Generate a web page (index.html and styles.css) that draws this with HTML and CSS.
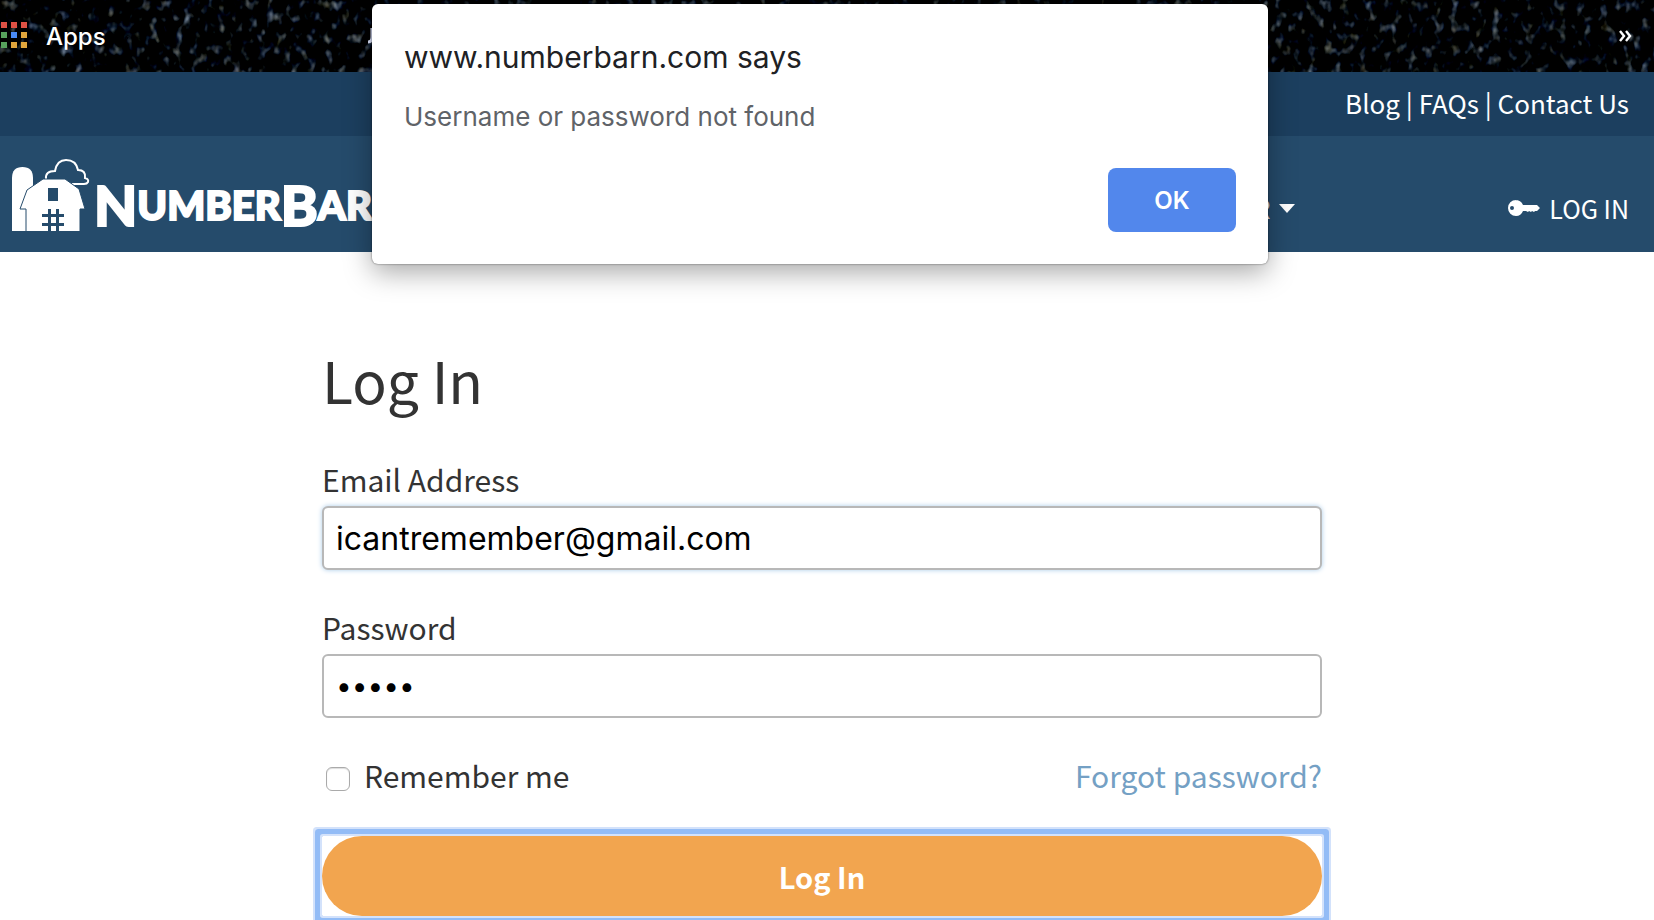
FILE: index.html
```html
<!DOCTYPE html>
<html lang="en">
<head>
  <meta charset="UTF-8">
  <meta name="viewport" content="width=device-width, initial-scale=1.0">
  <title>Log In - NumberBarn</title>
  <link rel="stylesheet" href="styles.css">
</head>
<body>
  <div class="bookmarks">
    <svg class="stars" aria-hidden="true">
      <filter id="night" x="0" y="0" width="100%" height="100%" color-interpolation-filters="sRGB">
        <feTurbulence type="fractalNoise" baseFrequency="0.12 0.09" numOctaves="2" seed="8" />
        <feColorMatrix values="1.3 0.3 0 0 -0.92  1.3 0.3 0.1 0 -0.94  1.3 0.2 0.3 0 -0.96  0 0 0 0 1" />
      </filter>
      <rect width="100%" height="100%" filter="url(#night)" />
    </svg>
    <a class="apps" href="#">
      <svg width="28" height="28" viewBox="0 0 28 28" aria-hidden="true">
        <path fill="#dd5144" d="M1 0h6v6H1zM11 0h6v6h-6zM21 0h6v6h-6z" />
        <path fill="#57a15c" d="M1 10h6v6H1zM1 20h6v6H1z" />
        <path fill="#4a8af4" d="M11 10h6v6h-6z" />
        <path fill="#e0a53c" d="M21 10h6v6h-6zM11 20h6v6h-6zM21 20h6v6h-6z" />
      </svg>
      Apps
    </a>
    <svg class="bookmark" width="24" height="16" viewBox="0 0 24 16" aria-hidden="true">
      <path fill="none" stroke="#dfe6ff" stroke-width="3" d="M4 0v9q0 5-4 5" />
    </svg>
    <button class="more" type="button" aria-label="More bookmarks">
      <svg width="14" height="12" viewBox="0 0 14 12" aria-hidden="true">
        <path fill="none" stroke="#fff" stroke-width="2.4" d="M1 1l4 5-4 5M7 1l4 5-4 5" />
      </svg>
    </button>
  </div>

  <div class="top-links">
    <a href="#">Blog</a> | <a href="#">FAQs</a> | <a href="#">Contact Us</a>
  </div>

  <header class="header">
    <a class="logo" href="#">
      <svg width="78" height="72" viewBox="0 0 78 72" aria-hidden="true">
        <path fill="#fff" d="M0 72V19Q0 8 10.500 8T21 19V72z" />
        <path fill="none" stroke="#fff" stroke-width="2" d="M34 20Q33 12 43 12Q45 1 54 1Q64 1 66 11Q74 11 73 19Q77 20 76 23Q75 25 72 25H60" />
        <path fill="#fff" stroke="#254b6b" d="M15 31L31 20H53L67 30 73 50H68V73H14V50H8z" />
        <path fill="#254b6b" d="M36 29h10v13H36zM36 50h3v22h-3zM44 50h3v22h-3zM30 55h22v3H30zM30 64h22v3H30z" />
      </svg>
      <span class="wordmark"><b>N</b>UMBER<b>B</b>ARN</span>
    </a>
    <nav class="nav">
      <button class="nav-item" type="button">
        YOUR
        <svg width="16" height="9" viewBox="0 0 16 9" aria-hidden="true"><path fill="#fff" d="M0 0h16L8 9z" /></svg>
      </button>
      <a class="nav-item" href="#">
        <svg width="33" height="18" viewBox="0 0 33 18" aria-hidden="true">
          <path fill="#fff" fill-rule="evenodd" d="M8 1q6 0 8 5h14l3 3-3 3h-2l-1 1-2-1-1 1-2-1-1 1-2-1h-3q-2 5-7 5a8 8 0 010-16zM5 7a2 2 0 100 4 2 2 0 000-4z" />
        </svg>
        LOG IN
      </a>
    </nav>
  </header>

  <main class="login">
    <h1>Log In</h1>
    <form>
      <label for="email">Email Address</label>
      <input class="field active" type="email" id="email" name="email" value="icantremember@gmail.com">

      <label for="password">Password</label>
      <input class="field" type="password" id="password" name="password" value="12345">

      <div class="options">
        <input type="checkbox" id="remember" name="remember">
        <label for="remember">Remember me</label>
        <a href="#">Forgot password?</a>
      </div>

      <div class="focus-ring">
        <button class="submit" type="submit">Log In</button>
      </div>
    </form>
  </main>

  <div class="alert" role="alertdialog" aria-labelledby="alert-title" aria-describedby="alert-text">
    <h2 id="alert-title">www.numberbarn.com says</h2>
    <p id="alert-text">Username or password not found</p>
    <button type="button">OK</button>
  </div>
</body>
</html>
```
FILE: styles.css
```css
* {
  box-sizing: border-box;
}

body {
  margin: 0;
  min-height: 100vh;
  position: relative;
  background-color: #fff;
  color: #333;
  font-family: "Noto Sans CJK SC", "Open Sans", sans-serif;
  font-size: 30px;
}

a {
  color: inherit;
  text-decoration: none;
}

button {
  padding: 0;
  border: none;
  background: none;
  color: inherit;
  font: inherit;
  cursor: pointer;
}

/* Browser bookmarks */
.bookmarks {
  position: relative;
  display: flex;
  align-items: center;
  height: 72px;
  padding-right: 21px;
  background-color: #000;
  color: #fff;
  overflow: hidden;
}

.stars {
  position: absolute;
  inset: 0;
  width: 100%;
  height: 100%;
}

.apps {
  position: relative;
  display: flex;
  align-items: center;
  gap: 18px;
  font-family: Inter, sans-serif;
  font-size: 24px;
  font-weight: 500;
}

.bookmark {
  position: relative;
  margin-left: 262px;
}

.more {
  position: relative;
  display: flex;
  margin-left: auto;
}

/* Site header */
.top-links {
  height: 64px;
  padding-right: 25px;
  background-color: #1c3f5f;
  color: #fff;
  font-size: 26px;
  line-height: 62px;
  text-align: right;
}

.header {
  display: flex;
  align-items: center;
  justify-content: space-between;
  height: 116px;
  padding: 4px 25px 0 12px;
  background-color: #254b6b;
  color: #fff;
}

.logo {
  display: flex;
  gap: 4px;
}

.wordmark {
  display: flex;
  align-items: center;
  padding-top: 18px;
  font-family: Lato, sans-serif;
  font-size: 40px;
  font-weight: 900;
  line-height: 1;
  -webkit-text-stroke: 2px #fff;
}

.wordmark b {
  font-size: 56px;
  font-weight: 900;
}

.nav {
  display: flex;
  gap: 212px;
  padding-top: 24px;
  font-size: 25px;
  line-height: 36px;
}

.nav-item {
  display: flex;
  align-items: center;
  gap: 9px;
}

/* Login form */
.login {
  width: 1010px;
  max-width: 100%;
  margin: 0 auto;
  padding: 85px 10px 0 0;
}

.login h1 {
  margin: 0 0 33px;
  font-size: 57px;
  font-weight: 400;
  line-height: 84px;
}

.login form > label {
  display: block;
  padding-bottom: 2px;
  line-height: 50px;
}

.field {
  display: block;
  width: 100%;
  height: 64px;
  margin-bottom: 32px;
  padding: 0 12px;
  border: 2px solid #b8b8b8;
  border-radius: 6px;
  background-color: #fff;
  color: #000;
  font-family: Inter, sans-serif;
  font-size: 32px;
}

.field[type="password"] {
  font-size: 28px;
}

.field.active {
  box-shadow: 0 0 5px #a9cbe8;
}

.options {
  display: flex;
  align-items: center;
  height: 50px;
  margin-bottom: 36px;
}

.options input {
  appearance: none;
  width: 24px;
  height: 24px;
  margin: 8px 14px 0 4px;
  border: 1px solid #aaa;
  border-radius: 6px;
  background-color: #fff;
  box-shadow: inset 0 1px 1px #ddd;
}

.options a {
  margin-left: auto;
  color: #74a0c4;
}

.focus-ring {
  border-radius: 1px;
  box-shadow: 0 0 0 2px #d3e2fb, 0 0 0 7px #93bcf6, 0 0 0 9px #d3e2fb;
}

.submit {
  display: block;
  width: 100%;
  height: 80px;
  border-radius: 40px;
  background-color: #f2a54f;
  color: #fff;
  font-size: 29px;
  font-weight: 700;
}

/* Browser alert */
.alert {
  position: absolute;
  top: 4px;
  left: 0;
  right: 14px;
  display: flex;
  flex-direction: column;
  width: 896px;
  max-width: 100%;
  margin: 0 auto;
  padding: 32px;
  border-radius: 6px;
  background-color: #fff;
  box-shadow: 0 0 2px rgba(0, 0, 0, 0.6), 0 8px 28px rgba(0, 0, 0, 0.35);
  font-family: Inter, sans-serif;
}

.alert h2 {
  margin: 0 0 21px;
  color: #202124;
  font-size: 30px;
  font-weight: 400;
  line-height: 42px;
}

.alert p {
  margin: 0 0 33px;
  color: #5f6368;
  font-size: 26px;
  line-height: 36px;
}

.alert button {
  align-self: flex-end;
  width: 128px;
  height: 64px;
  border-radius: 8px;
  background-color: #5287ec;
  color: #fff;
  font-size: 24px;
  font-weight: 600;
}
```
